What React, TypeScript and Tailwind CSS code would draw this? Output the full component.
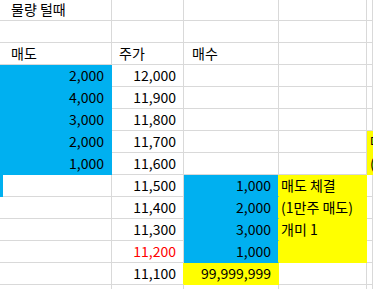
import React from "react";

type Fill = "blue" | "yellow" | undefined;

type CellProps = {
  text?: string;
  align?: "left" | "right";
  fill?: Fill;
  red?: boolean;
  pad?: string;
  edge?: string;
  children?: React.ReactNode;
};

const Cell = ({ text, align = "left", fill, red, pad, edge, children }: CellProps) => {
  const bg =
    fill === "blue"
      ? "bg-[#00b0f0] border-[#00b0f0]"
      : fill === "yellow"
        ? "bg-[#ffff00] border-[#ffff00]"
        : "bg-white border-[#d9d9d9]";
  return (
    <div
      className={`relative flex h-[22px] items-center overflow-visible whitespace-nowrap border-b border-r leading-[21px] ${bg} ${edge ?? ""} ${
        align === "right" ? "justify-end" : "justify-start"
      } ${pad ?? (align === "right" ? "pr-[7px]" : "pl-[2px]")} ${
        red ? "text-[#ff0000]" : "text-black"
      }`}
    >
      {children}
      {text}
    </div>
  );
};

type Row = CellProps[];

const rows: Row[] = [
  [{ text: "물량 털때", pad: "pl-[11px]" }, {}, {}, {}, {}],
  [{}, {}, {}, {}, {}],
  [
    { text: "매도", pad: "pl-[11px]" },
    { text: "주가", pad: "pl-[7px]" },
    { text: "매수", pad: "pl-[8px]" },
    {},
    {},
  ],
  [{ text: "2,000", align: "right", fill: "blue" }, { text: "12,000", align: "right" }, {}, {}, {}],
  [{ text: "4,000", align: "right", fill: "blue" }, { text: "11,900", align: "right" }, {}, {}, {}],
  [{ text: "3,000", align: "right", fill: "blue" }, { text: "11,800", align: "right" }, {}, {}, {}],
  [
    { text: "2,000", align: "right", fill: "blue" },
    { text: "11,700", align: "right" },
    {},
    {},
    { text: "매도 체결", fill: "yellow", pad: "pl-[3px]" },
  ],
  [
    { text: "1,000", align: "right", fill: "blue" },
    { text: "11,600", align: "right" },
    {},
    {},
    { text: "(1만주 매도)", fill: "yellow", pad: "pl-[3px]" },
  ],
  [
    { children: <div className="absolute left-0 top-0 h-[22px] w-[3px] bg-[#00b0f0]" /> },
    { text: "11,500", align: "right" },
    { text: "1,000", align: "right", fill: "blue", edge: "!border-r-[#ffff00]" },
    { text: "매도 체결", fill: "yellow" },
    {},
  ],
  [
    {},
    { text: "11,400", align: "right" },
    { text: "2,000", align: "right", fill: "blue", edge: "!border-r-[#ffff00]" },
    { text: "(1만주 매도)", fill: "yellow" },
    {},
  ],
  [
    {},
    { text: "11,300", align: "right" },
    { text: "3,000", align: "right", fill: "blue", edge: "!border-r-[#ffff00]" },
    { text: "개미 1", fill: "yellow" },
    {},
  ],
  [
    {},
    { text: "11,200", align: "right", red: true },
    { text: "1,000", align: "right", fill: "blue", edge: "!border-r-[#ffff00]" },
    { fill: "yellow" },
    {},
  ],
  [
    {},
    { text: "11,100", align: "right", edge: "!border-r-[#ffff00]" },
    { text: "99,999,999", align: "right", fill: "yellow" },
    {},
    {},
  ],
  [{}, {}, {}, {}, {}],
];

export default function App() {
  return (
    <div className="h-[289px] w-[373px] overflow-hidden bg-white font-['Noto_Sans_CJK_KR',sans-serif] text-[14px]">
      <div className="-mt-px">
        {rows.map((row, i) => (
          <div key={i} className="grid grid-cols-[112px_72px_95px_88px_1fr]">
            {row.map((cell, j) => (
              <Cell key={j} {...cell} />
            ))}
          </div>
        ))}
      </div>
    </div>
  );
}
